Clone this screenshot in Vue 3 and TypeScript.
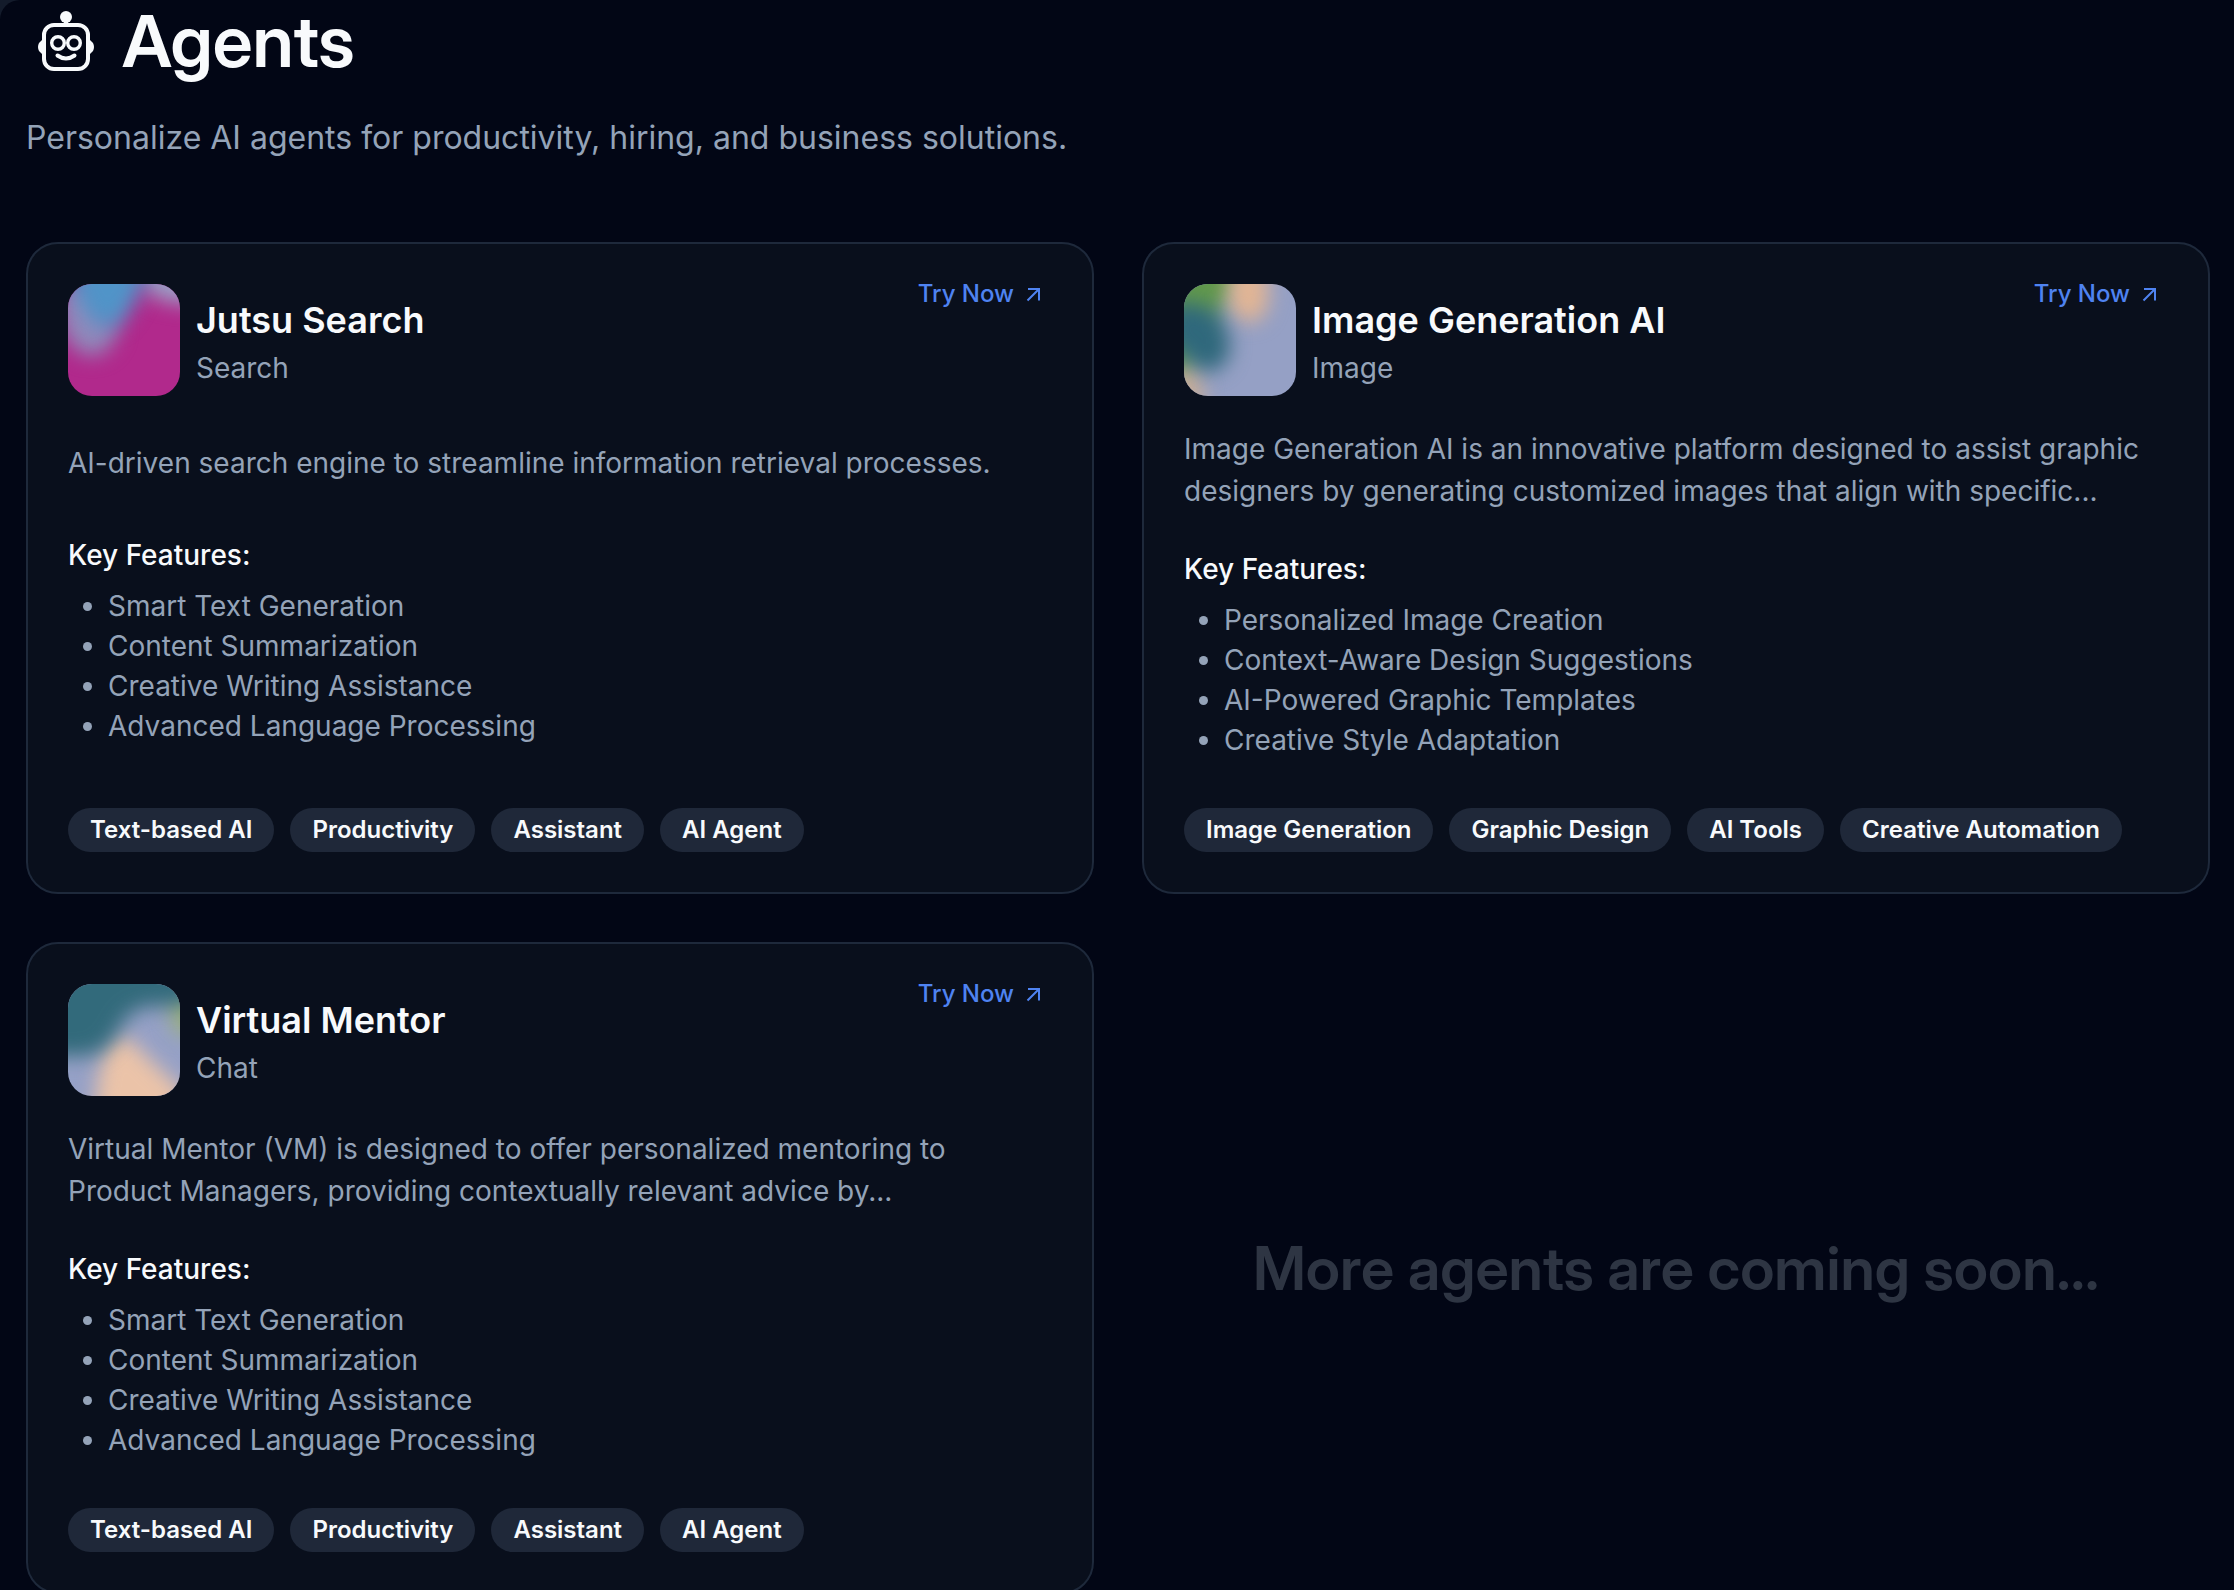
<script setup lang="ts">
interface Blob {
  d: string
  color: string
}

interface Art {
  base: string
  blobs: Blob[]
}

interface Agent {
  name: string
  category: string
  art: Art
  description: string
  features: string[]
  tags: string[]
}

const agents: Agent[] = [
  {
    name: 'Jutsu Search',
    category: 'Search',
    art: {
      base: '#b1298c',
      blobs: [
        { color: '#9aa0c6', d: 'M70-30H150V20Q108 22 88 14Q72 6 70-30z' },
        { color: '#9089bb', d: 'M-8 0H34L50 46Q42 72 22 72Q2 68-8 40z' },
        { color: '#5094c8', d: 'M-4-30H84Q76 10 56 36Q42 50 28 40Q8 24-4-30z' },
      ],
    },
    description: 'AI-driven search engine to streamline information retrieval processes.',
    features: ['Smart Text Generation', 'Content Summarization', 'Creative Writing Assistance', 'Advanced Language Processing'],
    tags: ['Text-based AI', 'Productivity', 'Assistant', 'AI Agent'],
  },
  {
    name: 'Image Generation AI',
    category: 'Image',
    art: {
      base: '#95a0c5',
      blobs: [
        { color: '#c8ae98', d: 'M-30 70H4Q16 86 20 112V140H-30z' },
        { color: '#61984c', d: 'M-30-40H62Q56 14 34 28L4 84L-30 88z' },
        { color: '#e2b594', d: 'M46-20H80Q92 22 74 36Q56 44 44 20z' },
        { color: '#2f687c', d: 'M-12 20Q26 14 40 40Q52 64 40 80Q24 96 6 78Q-6 66-18 56z' },
      ],
    },
    description: 'Image Generation AI is an innovative platform designed to assist graphic designers by generating customized images that align with specific...',
    features: ['Personalized Image Creation', 'Context-Aware Design Suggestions', 'AI-Powered Graphic Templates', 'Creative Style Adaptation'],
    tags: ['Image Generation', 'Graphic Design', 'AI Tools', 'Creative Automation'],
  },
  {
    name: 'Virtual Mentor',
    category: 'Chat',
    art: {
      base: '#96a1c7',
      blobs: [
        { color: '#ebc3a8', d: 'M42 56Q58 46 70 64L116 108V160H26Q26 84 42 56z' },
        { color: '#9ab07a', d: 'M100 6H150V50H106z' },
        { color: '#326a7b', d: 'M-30-40H150V4Q112 26 84 22Q62 24 52 44Q40 70 16 72H-30z' },
      ],
    },
    description: 'Virtual Mentor (VM) is designed to offer personalized mentoring to Product Managers, providing contextually relevant advice by...',
    features: ['Smart Text Generation', 'Content Summarization', 'Creative Writing Assistance', 'Advanced Language Processing'],
    tags: ['Text-based AI', 'Productivity', 'Assistant', 'AI Agent'],
  },
]
</script>

<template>
  <main class="page">
    <header class="intro">
      <div class="heading">
        <svg class="robot" viewBox="0 0 80 80" fill="none" stroke="currentColor" aria-hidden="true">
          <circle cx="40" cy="16" r="6" fill="currentColor" stroke="none" />
          <path d="M40 18v6" stroke-width="4" />
          <rect x="18" y="24" width="44" height="44" rx="10" stroke-width="4" />
          <path d="M17 38v16l-4-4q-2-4 0-8zM63 38v16l4-4q2-4 0-8z" fill="currentColor" stroke="none" />
          <circle cx="32" cy="42" r="6.3" stroke-width="3.4" />
          <circle cx="48" cy="42" r="6.3" stroke-width="3.4" />
          <path d="M31.500 54.500q8.500 6 17 0" stroke-width="4" stroke-linecap="round" />
        </svg>
        <h1>Agents</h1>
      </div>
      <p class="lead">Personalize AI agents for productivity, hiring, and business solutions.</p>
    </header>

    <section class="grid">
      <article v-for="(agent, index) in agents" :key="agent.name" class="card">
        <div class="top">
          <svg class="avatar" viewBox="0 0 112 112" aria-hidden="true">
            <defs>
              <filter :id="`soften-${index}`" x="-60%" y="-60%" width="220%" height="220%" color-interpolation-filters="sRGB">
                <feGaussianBlur stdDeviation="10" />
              </filter>
            </defs>
            <rect width="112" height="112" :fill="agent.art.base" />
            <path v-for="blob in agent.art.blobs" :key="blob.d" :d="blob.d" :fill="blob.color" :filter="`url(#soften-${index})`" />
          </svg>
          <div class="names">
            <h2>{{ agent.name }}</h2>
            <p>{{ agent.category }}</p>
          </div>
          <a class="try" href="#">
            Try Now
            <svg viewBox="0 0 20 20" fill="none" stroke="currentColor" stroke-width="2" aria-hidden="true">
              <path d="M4 5H15V16.500M15 5L3.500 16.500" />
            </svg>
          </a>
        </div>
        <div class="description">
          <p>{{ agent.description }}</p>
        </div>
        <div class="features">
          <h3>Key Features:</h3>
          <ul>
            <li v-for="feature in agent.features" :key="feature">{{ feature }}</li>
          </ul>
        </div>
        <div class="tags">
          <span v-for="tag in agent.tags" :key="tag">{{ tag }}</span>
        </div>
      </article>
      <div class="soon">More agents are coming soon...</div>
    </section>
  </main>
</template>

<style>
body {
  background: #131b2b;
}
</style>

<style scoped>
.page {
  box-sizing: border-box;
  height: 100vh;
  overflow: hidden;
  padding: 0 24px 0 26px;
  border-top-left-radius: 20px;
  background: #020615;
  color: #f8fafc;
  font-family: Inter, "Liberation Sans", sans-serif;
}

h1, h2, h3, p, ul {
  margin: 0;
  padding: 0;
}

.intro {
  display: flex;
  flex-direction: column;
  gap: 32px;
  margin-bottom: 80px;
}

.heading {
  display: flex;
  align-items: center;
  gap: 16px;
  height: 82px;
}

.robot {
  width: 80px;
  height: 80px;
}

h1 {
  font-family: "Inter Display", Inter, "Liberation Sans", sans-serif;
  font-size: 72px;
  line-height: 80px;
  font-weight: 600;
}

.lead {
  color: #94a3b8;
  font-size: 32px;
  line-height: 48px;
}

.grid {
  display: grid;
  grid-template-columns: 1fr 1fr;
  gap: 48px;
}

.card {
  display: flex;
  flex-direction: column;
  justify-content: space-between;
  box-sizing: border-box;
  height: 652px;
  padding: 40px;
  border: 2px solid #1e293b;
  border-radius: 32px;
  background: #090f1c;
}

.top {
  display: flex;
  align-items: flex-start;
  gap: 16px;
}

.avatar {
  width: 112px;
  height: 112px;
  border-radius: 24px;
  overflow: hidden;
}

.names {
  flex: 1;
  padding-top: 12px;
}

h2 {
  font-size: 36px;
  line-height: 48px;
  font-weight: 600;
}

.names p {
  margin-top: 4px;
  color: #94a3b8;
  font-size: 28px;
  line-height: 40px;
}

.try {
  display: flex;
  align-items: center;
  gap: 10px;
  margin-right: 8px;
  color: #4f83f1;
  font-size: 24px;
  line-height: 20px;
  font-weight: 500;
  text-decoration: none;
}

.try svg {
  width: 20px;
  height: 20px;
}

.description {
  display: flex;
  align-items: center;
  padding-bottom: 4px;
  color: #94a3b8;
  font-size: 28px;
  line-height: 42px;
}

.features {
  padding-bottom: 16px;
}

h3 {
  margin-bottom: 10px;
  font-size: 28px;
  line-height: 42px;
  font-weight: 500;
}

ul {
  padding-left: 40px;
  color: #94a3b8;
  font-size: 28px;
  line-height: 40px;
}

.tags {
  display: flex;
  gap: 16px;
}

.tags span {
  padding: 0 22px;
  border-radius: 22px;
  background: #1f2839;
  font-size: 24px;
  line-height: 44px;
  font-weight: 600;
}

.soon {
  display: flex;
  align-items: center;
  justify-content: center;
  color: #2e3543;
  font-family: "Inter Display", Inter, "Liberation Sans", sans-serif;
  font-size: 60px;
  line-height: 72px;
  font-weight: 600;
}
</style>
